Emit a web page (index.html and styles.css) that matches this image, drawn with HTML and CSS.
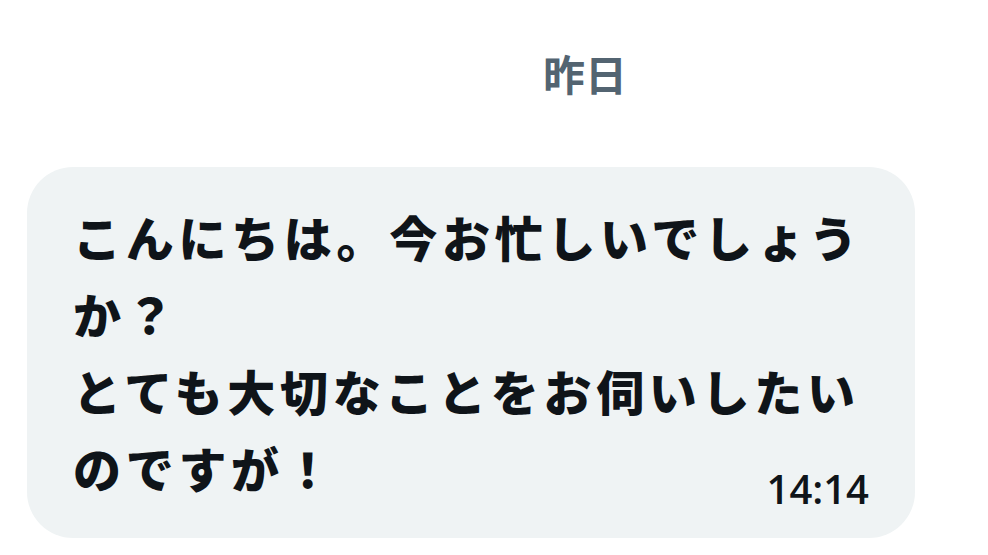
FILE: index.html
```html
<!DOCTYPE html>
<html lang="ja">
<head>
    <meta charset="UTF-8">
    <meta name="viewport" content="width=device-width, initial-scale=1.0">
    <title>メッセージ</title>
    <link rel="stylesheet" href="styles.css">
</head>
<body>
    <div class="chat">
        <div class="day-label">昨日</div>

        <div class="message">
            <p class="message-text">こんにちは。今お忙しいでしょうか？<br>とても大切なことをお伺いしたいのですが！<span class="message-time">14:14</span></p>
        </div>
    </div>
</body>
</html>
```

FILE: styles.css
```css
* {
    margin: 0;
    padding: 0;
    box-sizing: border-box;
}

body {
    font-family: "Noto Sans CJK JP", "Noto Sans", sans-serif;
    background: #ffffff;
    color: #0f1419;
    width: 988px;
    height: 555px;
    overflow: hidden;
}

.chat {
    display: flex;
    flex-direction: column;
    padding: 46px 0 0 27px;
}

.day-label {
    align-self: flex-start;
    margin-left: 516px;
    font-size: 42px;
    font-weight: 700;
    line-height: 54px;
    color: #536471;
}

.message {
    margin-top: 67px;
    width: 888px;
    background: #eff3f4;
    border-radius: 46px;
    padding: 31px 46px 29px 46px;
}

.message-text {
    font-size: 48px;
    font-weight: 900;
    line-height: 77px;
    letter-spacing: 4.7px;
}

.message-time {
    float: right;
    margin-top: 40px;
    font-family: "Open Sans", "Noto Sans", sans-serif;
    font-size: 40px;
    font-weight: 600;
    line-height: 40px;
    letter-spacing: 0;
    color: #0f1419;
}
```
